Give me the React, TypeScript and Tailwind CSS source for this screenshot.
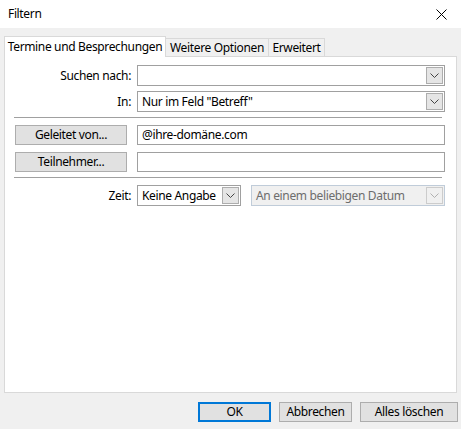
import React from "react";

function Chevron({ color = "#444" }: { color?: string }) {
  return (
    <svg width="9" height="5" viewBox="0 0 9 5">
      <path d="M0.5 0.5 L4.5 4.5 L8.5 0.5" fill="none" stroke={color} strokeWidth="1" />
    </svg>
  );
}

function Combo({ text, width }: { text: string; width: string }) {
  return (
    <div className={`flex h-[21px] ${width} items-stretch border border-[#a0a0a0] bg-white p-[1px]`}>
      <div className="flex-1 overflow-hidden pl-[3px] leading-[17px] text-black">{text}</div>
      <div className="flex w-[17px] items-center justify-center border border-[#adadad] bg-[#e5e5e5]">
        <Chevron />
      </div>
    </div>
  );
}

function Button({ label, className = "" }: { label: string; className?: string }) {
  return (
    <div
      className={`flex h-[20px] items-center justify-center border border-[#adadad] bg-[#e1e1e1] text-black ${className}`}
    >
      {label}
    </div>
  );
}

export default function App() {
  return (
    <div className="relative h-[429px] w-[461px] overflow-hidden whitespace-nowrap bg-[#f0f0f0] font-['Noto_Sans',sans-serif] text-[12px] tracking-[-0.35px] text-black">
      {/* title bar */}
      <div className="flex h-[28px] items-center justify-between bg-white pl-[8px] pr-[14px]">
        <span className="text-[12px]">Filtern</span>
        <svg width="11" height="11" viewBox="0 0 11 11">
          <path d="M0.5 0.5 L10.5 10.5 M10.5 0.5 L0.5 10.5" stroke="#000" strokeWidth="1" />
        </svg>
      </div>

      {/* tabs */}
      <div className="mt-[8px] flex h-[20px] items-start pl-[4px]">
        <div className="relative z-10 flex h-[21px] w-[162px] items-center justify-center border-l border-r border-t border-[#d9d9d9] bg-white pb-[1px]">
          Termine und Besprechungen
        </div>
        <div className="mt-[2px] flex h-[18px] w-[103px] items-center justify-center border-r border-t border-[#d9d9d9] bg-[#f0f0f0]">
          Weitere Optionen
        </div>
        <div className="mt-[2px] flex h-[18px] w-[56px] items-center justify-center border-r border-t border-[#d9d9d9] bg-[#f0f0f0]">
          Erweitert
        </div>
      </div>

      {/* panel */}
      <div className="relative z-0 ml-[4px] h-[337px] w-[453px] border border-[#d9d9d9] bg-white pt-[8px]">
        <div className="flex items-center">
          <div className="w-[132px] pr-[6px] text-right">Suchen nach:</div>
          <Combo text="" width="w-[308px]" />
        </div>
        <div className="mt-[5px] flex items-center">
          <div className="w-[132px] pr-[6px] text-right">In:</div>
          <Combo text={'Nur im Feld "Betreff"'} width="w-[308px]" />
        </div>
        <div className="ml-[9px] mt-[5px] w-[428px] border-t border-[#a0a0a0]" />
        <div className="mt-[7px] flex items-center">
          <div className="w-[132px] pl-[10px]">
            <Button label="Geleitet von..." className="w-[112px]" />
          </div>
          <div className="flex h-[20px] w-[308px] items-center border border-[#a0a0a0] bg-white pl-[4px]">
            @ihre-domäne.com
          </div>
        </div>
        <div className="mt-[7px] flex items-center">
          <div className="w-[132px] pl-[10px]">
            <Button label="Teilnehmer..." className="w-[112px]" />
          </div>
          <div className="flex h-[20px] w-[308px] items-center border border-[#a0a0a0] bg-white pl-[4px]" />
        </div>
        <div className="ml-[9px] mt-[5px] w-[428px] border-t border-[#a0a0a0]" />
        <div className="mt-[7px] flex items-center">
          <div className="w-[132px] pr-[6px] text-right">Zeit:</div>
          <Combo text="Keine Angabe" width="w-[104px]" />
          <div className="ml-[10px] flex h-[21px] w-[194px] items-stretch border border-[#c0ccd9] bg-[#f0f0f0] p-[1px]">
            <div className="flex-1 pl-[3px] leading-[17px] text-[#6d6d6d]">An einem beliebigen Datum</div>
            <div className="flex w-[17px] items-center justify-center border border-[#cccccc] bg-[#f0f0f0]">
              <Chevron color="#b0b0b0" />
            </div>
          </div>
        </div>
      </div>

      {/* footer */}
      <div className="mt-[9px] flex justify-end gap-[8px] pr-[3px]">
        <div className="flex h-[20px] w-[73px] items-center justify-center border-2 border-[#0078d7] bg-[#e1e1e1]">
          OK
        </div>
        <Button label="Abbrechen" className="w-[73px]" />
        <Button label="Alles löschen" className="w-[98px]" />
      </div>
    </div>
  );
}
